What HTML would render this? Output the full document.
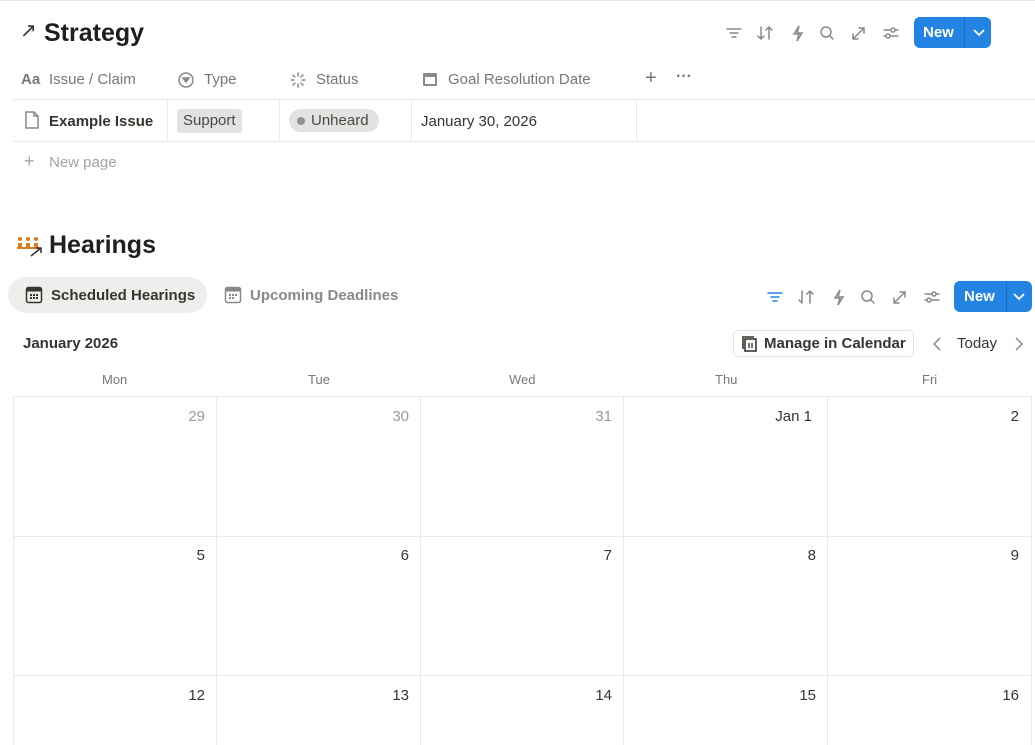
<!DOCTYPE html><html><head><meta charset="utf-8"><style>
*{box-sizing:border-box;margin:0;padding:0}
body{width:1035px;height:745px;overflow:hidden;background:#fff;font-family:"Liberation Sans",sans-serif;color:#37352f;position:relative}
.a{position:absolute;white-space:nowrap}
.g{color:#787774}
.btn{position:absolute;background:#2383e2;color:#fff;border-radius:6px;font-weight:bold;font-size:15px;height:31px}
.btn span{position:absolute;top:7px}
.hl{position:absolute;background:#e9e9e7;height:1px}
.vl{position:absolute;background:#e9e9e7;width:1px}
svg{position:absolute}
.ic{stroke:#8a8985;fill:none;stroke-width:1.5;stroke-linecap:round}
</style></head><body>
<div class="hl" style="left:0;top:0;width:1035px;background:#e5e5e3"></div>
<div class="a" style="left:20px;top:18px;font-size:20px">↗</div>
<div class="a" style="left:44px;top:19px;font-size:25px;font-weight:bold;color:#1f1f1d">Strategy</div>
<!-- toolbar 1 -->
<svg width="200" height="20" style="left:725px;top:23px" class="ic">
<path d="M2 6h14M5 10h8M7 14h4"/>
<path d="M36 4v12M33 13l3 3M44 16V4M41 7l3-3M47 7l-3-3M39 13l-3 3"/>
<path d="M74 3l-5 8h5l-2 7 5-8h-5z"/>
<circle cx="101" cy="9" r="5"/><path d="M105 13l3 3"/>
<path d="M128 16l11-11M134 5h5v5M128 11v5h5"/>
<path d="M159 7h14M159 13h14"/><circle cx="168" cy="7" r="2" fill="#fff"/><circle cx="163" cy="13" r="2" fill="#fff"/>
</svg>
<div class="btn" style="left:914px;top:17px;width:77px"><span style="left:9px">New</span><div style="position:absolute;left:50px;top:0;width:1px;height:31px;background:#1a6ec2"></div><svg width="14" height="10" style="left:58px;top:11px"><path d="M2 2l5 5 5-5" stroke="#fff" stroke-width="1.8" fill="none"/></svg></div>
<!-- table header -->
<div class="a g" style="left:21px;top:71px;font-size:15px;font-weight:bold">Aa</div>
<div class="a g" style="left:49px;top:71px;font-size:15px">Issue / Claim</div>
<svg width="18" height="18" style="left:177px;top:71px" class="ic"><circle cx="9" cy="9" r="7"/><path d="M6 7h6l-3 4z" fill="#8a8985"/></svg>
<div class="a g" style="left:204px;top:71px;font-size:15px">Type</div>
<svg width="18" height="18" style="left:289px;top:71px" class="ic"><path d="M9 2v3M9 13v3M2 9h3M13 9h3M4 4l2 2M12 12l2 2M4 14l2-2M12 6l2-2"/></svg>
<div class="a g" style="left:316px;top:71px;font-size:15px">Status</div>
<svg width="18" height="18" style="left:421px;top:70px"><rect x="2" y="3" width="14" height="13" rx="1" fill="#8a8985"/><rect x="4" y="7" width="10" height="7" fill="#fff"/></svg>
<div class="a g" style="left:448px;top:71px;font-size:15px">Goal Resolution Date</div>
<div class="a g" style="left:645px;top:67px;font-size:20px">+</div>
<div class="a g" style="left:676px;top:68px;font-size:16px;font-weight:bold">···</div>
<div class="hl" style="left:13px;top:99px;width:1022px"></div>
<div class="hl" style="left:13px;top:141px;width:1022px"></div>
<div class="vl" style="left:167px;top:99px;height:42px"></div>
<div class="vl" style="left:279px;top:99px;height:42px"></div>
<div class="vl" style="left:411px;top:99px;height:42px"></div>
<div class="vl" style="left:636px;top:99px;height:42px"></div>
<svg width="18" height="20" style="left:23px;top:110px" class="ic" stroke-width="1.2"><path d="M3 2h8l4 4v12H3z M11 2v4h4"/></svg>
<div class="a" style="left:49px;top:113px;font-size:15px;font-weight:bold">Example Issue</div>
<div class="a" style="left:177px;top:109px;height:24px;padding:3px 6px;background:#e3e2e0;border-radius:3px;font-size:15px;color:#4a4945">Support</div>
<div class="a" style="left:289px;top:109px;height:23px;padding:3px 10px 0 22px;background:#e3e2e0;border-radius:12px;font-size:15px;color:#4a4945">Unheard<div style="position:absolute;left:8px;top:8px;width:8px;height:8px;border-radius:50%;background:#91918e"></div></div>
<div class="a" style="left:421px;top:113px;font-size:15px">January 30, 2026</div>
<div class="a g" style="left:24px;top:151px;font-size:18px;color:#a5a4a0">+</div>
<div class="a" style="left:49px;top:154px;font-size:15px;color:#a5a4a0">New page</div>
<!-- Hearings -->
<svg width="28" height="22" style="left:16px;top:235px"><g fill="#e07a1f"><circle cx="4" cy="4" r="2"/><circle cx="12" cy="4" r="2"/><circle cx="20" cy="4" r="2"/><rect x="2" y="8" width="4" height="4"/><rect x="10" y="8" width="4" height="4"/><rect x="18" y="8" width="4" height="4"/><rect x="1" y="12" width="22" height="2"/></g><path d="M15 21l10-8M20 13h5v5" stroke="#333" stroke-width="1.5" fill="none"/></svg>
<div class="a" style="left:49px;top:231px;font-size:25px;font-weight:bold;color:#1f1f1d">Hearings</div>
<div class="a" style="left:8px;top:277px;width:199px;height:36px;background:#efeeec;border-radius:18px"></div>
<svg width="18" height="18" style="left:25px;top:286px"><rect x="1.5" y="1.5" width="15" height="15" rx="2" fill="none" stroke="#37352f" stroke-width="1.5"/><rect x="1.5" y="1.5" width="15" height="4" fill="#37352f"/><g fill="#37352f"><rect x="5" y="8" width="2" height="2"/><rect x="8" y="8" width="2" height="2"/><rect x="11" y="8" width="2" height="2"/><rect x="5" y="11" width="2" height="2"/><rect x="8" y="11" width="2" height="2"/><rect x="11" y="11" width="2" height="2"/></g></svg>
<div class="a" style="left:51px;top:287px;font-size:15px;font-weight:bold;color:#37352f">Scheduled Hearings</div>
<svg width="18" height="18" style="left:224px;top:286px"><rect x="1.5" y="1.5" width="15" height="15" rx="2" fill="none" stroke="#8a8985" stroke-width="1.5"/><rect x="1.5" y="1.5" width="15" height="4" fill="#8a8985"/><g fill="#8a8985"><rect x="5" y="8" width="2" height="2"/><rect x="8" y="8" width="2" height="2"/><rect x="11" y="8" width="2" height="2"/><rect x="5" y="11" width="2" height="2"/><rect x="8" y="11" width="2" height="2"/></g></svg>
<div class="a" style="left:250px;top:287px;font-size:15px;font-weight:bold;color:#8a8985">Upcoming Deadlines</div>
<svg width="200" height="20" style="left:766px;top:287px" class="ic">
<path d="M2 6h14M5 10h8M7 14h4" stroke="#2383e2"/>
<path d="M36 4v12M33 13l3 3M44 16V4M41 7l3-3M47 7l-3-3"/>
<path d="M74 3l-5 8h5l-2 7 5-8h-5z"/>
<circle cx="101" cy="9" r="5"/><path d="M105 13l3 3"/>
<path d="M128 16l11-11M134 5h5v5M128 11v5h5"/>
<path d="M159 7h14M159 13h14"/><circle cx="168" cy="7" r="2" fill="#fff"/><circle cx="163" cy="13" r="2" fill="#fff"/>
</svg>
<div class="btn" style="left:954px;top:281px;width:78px"><span style="left:10px">New</span><div style="position:absolute;left:52px;top:0;width:1px;height:31px;background:#1a6ec2"></div><svg width="14" height="10" style="left:58px;top:11px"><path d="M2 2l5 5 5-5" stroke="#fff" stroke-width="1.8" fill="none"/></svg></div>
<div class="a" style="left:23px;top:335px;font-size:15px;font-weight:bold">January 2026</div>
<div class="a" style="left:733px;top:330px;width:181px;height:27px;border:1px solid #e3e2e0;border-radius:5px"></div>
<svg width="16" height="16" style="left:742px;top:336px"><rect x="3" y="3" width="11" height="12" fill="none" stroke="#37352f" stroke-width="1.6"/><path d="M1 13V1h11" stroke="#37352f" stroke-width="1.6" fill="none"/><path d="M7 7v5M10 7v5" stroke="#37352f" stroke-width="1.4"/></svg>
<div class="a" style="left:764px;top:335px;font-size:15px;font-weight:bold">Manage in Calendar</div>
<svg width="12" height="16" style="left:931px;top:336px"><path d="M9 2L3 8l6 6" stroke="#8a8985" stroke-width="1.5" fill="none"/></svg>
<div class="a" style="left:957px;top:335px;font-size:15px">Today</div>
<svg width="12" height="16" style="left:1013px;top:336px"><path d="M3 2l6 6-6 6" stroke="#8a8985" stroke-width="1.5" fill="none"/></svg>
<!-- calendar -->
<div class="a g" style="left:102px;top:372px;font-size:13px">Mon</div>
<div class="a g" style="left:308px;top:372px;font-size:13px">Tue</div>
<div class="a g" style="left:509px;top:372px;font-size:13px">Wed</div>
<div class="a g" style="left:715px;top:372px;font-size:13px">Thu</div>
<div class="a g" style="left:922px;top:372px;font-size:13px">Fri</div>
<div class="hl" style="left:13px;top:396px;width:1019px"></div>
<div class="hl" style="left:13px;top:536px;width:1019px"></div>
<div class="hl" style="left:13px;top:675px;width:1019px"></div>
<div class="vl" style="left:13px;top:396px;height:349px"></div>
<div class="vl" style="left:216px;top:396px;height:349px"></div>
<div class="vl" style="left:420px;top:396px;height:349px"></div>
<div class="vl" style="left:623px;top:396px;height:349px"></div>
<div class="vl" style="left:827px;top:396px;height:349px"></div>
<div class="vl" style="left:1031px;top:396px;height:349px"></div>
<div style="font-size:15px">
<div class="a g" style="right:830px;top:408px;color:#9b9a97">29</div>
<div class="a g" style="right:626px;top:408px;color:#9b9a97">30</div>
<div class="a g" style="right:423px;top:408px;color:#9b9a97">31</div>
<div class="a" style="right:223px;top:408px">Jan 1</div>
<div class="a" style="right:16px;top:408px">2</div>
<div class="a" style="right:830px;top:547px">5</div>
<div class="a" style="right:626px;top:547px">6</div>
<div class="a" style="right:423px;top:547px">7</div>
<div class="a" style="right:219px;top:547px">8</div>
<div class="a" style="right:16px;top:547px">9</div>
<div class="a" style="right:830px;top:687px">12</div>
<div class="a" style="right:626px;top:687px">13</div>
<div class="a" style="right:423px;top:687px">14</div>
<div class="a" style="right:219px;top:687px">15</div>
<div class="a" style="right:16px;top:687px">16</div>
</div>
</body></html>
